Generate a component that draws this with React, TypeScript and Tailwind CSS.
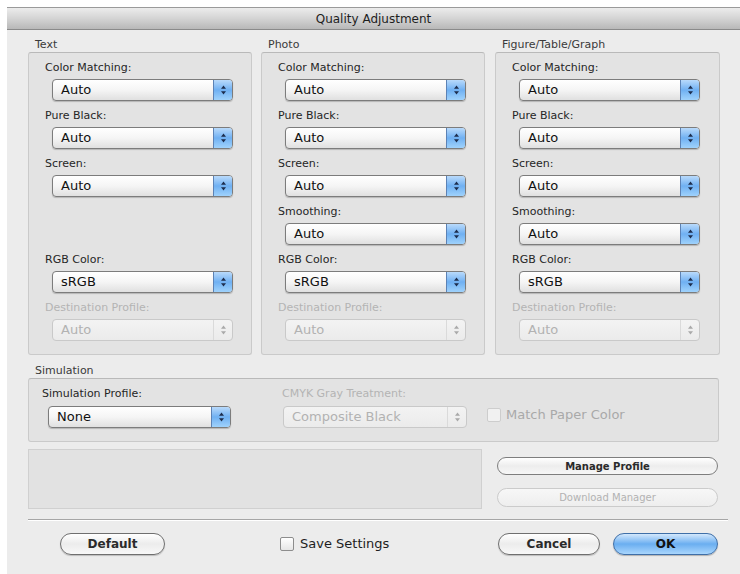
import React from 'react';

const font = "font-['DejaVu_Sans',sans-serif]";

function Arrows({ disabled }: { disabled?: boolean }) {
  const c = disabled ? '#a9a9a9' : '#1d2d4d';
  return (
    <svg width="7" height="12" viewBox="0 0 7 12">
      <path d="M3.5 1.5 L6 4.8 H1 Z" fill={c} />
      <path d="M3.5 10.5 L6 7.2 H1 Z" fill={c} />
    </svg>
  );
}

function Select({ value, disabled, className = '' }: { value: string; disabled?: boolean; className?: string }) {
  if (disabled) {
    return (
      <div className={`flex h-[22px] items-stretch overflow-hidden rounded-[4px] border border-[#c9c9c9] bg-linear-to-b from-[#f3f3f3] to-[#ebebeb] ${className}`}>
        <span className="flex-1 pl-[8px] text-[13px] leading-[20px] text-[#b2b2b2]">{value}</span>
        <span className="flex w-[19px] items-center justify-center border-l border-[#dadada]">
          <Arrows disabled />
        </span>
      </div>
    );
  }
  return (
    <div className={`flex h-[22px] items-stretch overflow-hidden rounded-[4px] border border-[#7c7c7c] bg-linear-to-b from-white via-[#f5f5f5] to-[#e0e0e0] shadow-[0_1px_1px_rgba(0,0,0,0.2)] ${className}`}>
      <span className="flex-1 pl-[8px] text-[13px] leading-[20px] text-[#111]">{value}</span>
      <span className="flex w-[19px] items-center justify-center border-l border-[#5c82b5] bg-linear-to-b from-[#b9dafb] via-[#6fb0f2] to-[#9fd2fc]">
        <Arrows />
      </span>
    </div>
  );
}

function Row({ label, value, disabled }: { label: string; value: string; disabled?: boolean }) {
  return (
    <div className="flex flex-col">
      <span className={`pl-[16px] text-[11px] leading-[13px] ${disabled ? 'text-[#b4b4b4]' : 'text-[#262626]'}`}>{label}</span>
      <Select value={value} disabled={disabled} className="mt-[5px] ml-[23px] w-[181px]" />
    </div>
  );
}

function Group({ title, smoothing, className = '' }: { title: string; smoothing: boolean; className?: string }) {
  return (
    <div className={`flex flex-col ${className}`}>
      <span className="h-[14px] pl-[7px] text-[11px] leading-[13px] text-[#3a3a3a]">{title}</span>
      <div className="flex flex-col gap-[8px] rounded-[3px] border border-[#cacaca] border-t-[#b9b9b9] bg-[#e3e3e3] pt-[8px] pb-[13px]">
        <Row label="Color Matching:" value="Auto" />
        <Row label="Pure Black:" value="Auto" />
        <Row label="Screen:" value="Auto" />
        {smoothing ? <Row label="Smoothing:" value="Auto" /> : <div className="h-[40px]" />}
        <Row label="RGB Color:" value="sRGB" />
        <Row label="Destination Profile:" value="Auto" disabled />
      </div>
    </div>
  );
}

function Checkbox({ disabled }: { disabled?: boolean }) {
  return (
    <span
      className={`inline-block h-[14px] w-[14px] rounded-[2px] border ${
        disabled ? 'border-[#cdcdcd] bg-[#f1f1f1]' : 'border-[#8d8d8d] bg-linear-to-b from-white to-[#e6e6e6]'
      }`}
    />
  );
}

export default function App() {
  return (
    <div className={`h-[574px] w-[740px] overflow-hidden bg-white pt-[7px] pl-[7px] ${font}`}>
      <div className="flex h-full flex-col bg-[#ececec]">
        {/* title bar */}
        <div className="flex h-[23px] items-center justify-center border-t border-[#9a9a9a] border-b border-b-[#8a8a8a] bg-linear-to-b from-[#ececec] via-[#d4d4d4] to-[#b8b8b8]">
          <span className="text-[12px] text-[#1e1e1e]">Quality Adjustment</span>
        </div>

        <div className="flex flex-col pt-[8px] pl-[21px]">
          {/* three groups */}
          <div className="flex">
            <Group title="Text" smoothing={false} className="w-[224px]" />
            <Group title="Photo" smoothing className="ml-[9px] w-[224px]" />
            <Group title="Figure/Table/Graph" smoothing className="ml-[10px] w-[225px]" />
          </div>

          {/* simulation */}
          <span className="mt-[9px] h-[14px] pl-[7px] text-[11px] leading-[13px] text-[#3a3a3a]">Simulation</span>
          <div className="flex w-[691px] items-end rounded-[3px] border border-[#cacaca] border-t-[#b9b9b9] bg-[#e3e3e3] pt-[8px] pr-[10px] pb-[13px] pl-[13px]">
            <div className="flex w-[189px] flex-col">
              <span className="text-[11px] leading-[13px] text-[#262626]">Simulation Profile:</span>
              <Select value="None" className="mt-[6px] ml-[6px] w-[183px]" />
            </div>
            <div className="ml-[51px] flex flex-col">
              <span className="text-[11px] leading-[13px] text-[#b4b4b4]">CMYK Gray Treatment:</span>
              <Select value="Composite Black" disabled className="mt-[6px] ml-[1px] w-[184px]" />
            </div>
            <div className="mb-[4px] ml-[20px] flex h-[18px] items-center gap-[5px]">
              <Checkbox disabled />
              <span className="text-[13px] text-[#a9a9a9]">Match Paper Color</span>
            </div>
          </div>

          {/* profile area */}
          <div className="mt-[7px] flex">
            <div className="h-[60px] w-[454px] border border-[#d0d0d0] bg-[#e2e2e2]" />
            <div className="ml-[15px] flex w-[221px] flex-col pt-[8px]">
              <button className="h-[18px] rounded-full border border-[#7e7e7e] bg-linear-to-b from-white via-[#ededed] to-[#f7f7f7] text-[10px] font-bold text-[#2a2a2a]">
                Manage Profile
              </button>
              <button className="mt-[13px] h-[19px] rounded-full border border-[#cbcbcb] bg-linear-to-b from-[#f7f7f7] to-[#eeeeee] text-[10px] text-[#b2b2b2]">
                Download Manager
              </button>
            </div>
          </div>

          {/* separator */}
          <div className="mt-[10px] h-[2px] w-[700px] border-t border-[#a6a6a6] border-b border-b-white" />

          {/* bottom buttons */}
          <div className="mt-[12px] flex w-[700px] items-center pr-[10px]">
            <button className="ml-[32px] h-[22px] w-[105px] rounded-full border border-[#6f6f6f] bg-linear-to-b from-white via-[#ececec] to-[#f8f8f8] text-[12px] font-bold text-[#2a2a2a] shadow-[0_1px_1px_rgba(0,0,0,0.2)]">
              Default
            </button>
            <div className="ml-[115px] flex items-center gap-[6px]">
              <Checkbox />
              <span className="text-[13px] text-[#1e1e1e]">Save Settings</span>
            </div>
            <div className="ml-auto flex gap-[13px]">
              <button className="h-[22px] w-[102px] rounded-full border border-[#6f6f6f] bg-linear-to-b from-white via-[#ececec] to-[#f8f8f8] text-[12px] font-bold text-[#2a2a2a] shadow-[0_1px_1px_rgba(0,0,0,0.2)]">
                Cancel
              </button>
              <button className="h-[22px] w-[105px] rounded-full border border-[#3f6fa8] bg-linear-to-b from-[#d3e8fc] via-[#6aaef0] to-[#a9d6fd] text-[12px] font-bold text-[#111] shadow-[0_1px_1px_rgba(0,0,0,0.25)]">
                OK
              </button>
            </div>
          </div>
        </div>
      </div>
    </div>
  );
}
